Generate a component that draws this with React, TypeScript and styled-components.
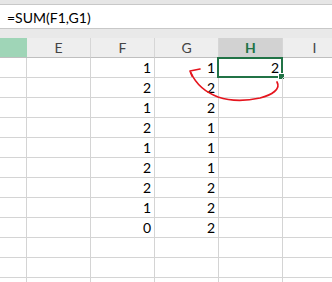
import React from "react";
import styled, { createGlobalStyle } from "styled-components";

const Global = createGlobalStyle`
  html, body { margin: 0; padding: 0; background: #ffffff; overflow: hidden; }
  body { font-family: Lato, "Open Sans", "Liberation Sans", sans-serif; }
`;

const Page = styled.div`
  width: 332px;
  height: 282px;
  display: flex;
  flex-direction: column;
  overflow: hidden;
  background: #ffffff;
`;

const TopStrip = styled.div`
  height: 4px;
  background: #e6e6e6;
  border-bottom: 1px solid #c8c8c8;
  flex: none;
`;

const FormulaBar = styled.div`
  height: 24px;
  flex: none;
  display: flex;
  align-items: center;
  padding-left: 7px;
  padding-top: 1px;
  box-sizing: border-box;
  background: #ffffff;
  border-bottom: 1px solid #c8c8c8;
  font-size: 14px;
  color: #000000;
`;

const Band = styled.div`
  height: 9px;
  flex: none;
  background: #e9e9e9;
`;

const Sheet = styled.div`
  position: relative;
  display: grid;
  grid-template-columns: 27px 64px 64px 64px 64px 64px 64px;
  grid-auto-rows: 20px;
`;

const Header = styled.div<{ $state?: "corner" | "active" }>`
  height: 20px;
  box-sizing: border-box;
  display: flex;
  align-items: center;
  justify-content: center;
  font-size: 14px;
  background: ${(p) =>
    p.$state === "corner" ? "#9fd5b7" : p.$state === "active" ? "#d2d2d2" : "#eeeeee"};
  color: ${(p) => (p.$state === "active" ? "#217346" : "#444444")};
  font-weight: ${(p) => (p.$state === "active" ? 700 : 400)};
  border-right: 1px solid ${(p) => (p.$state === "corner" ? "#9fd5b7" : "#d6d6d6")};
  border-bottom: 1px solid ${(p) => (p.$state === "active" ? "#217346" : "#bfbfbf")};
`;

const Cell = styled.div`
  position: relative;
  height: 20px;
  box-sizing: border-box;
  display: flex;
  align-items: flex-end;
  justify-content: flex-end;
  padding: 0 3px 1px 0;
  font-size: 14px;
  color: #000000;
  border-right: 1px solid #d4d4d4;
  border-bottom: 1px solid #d4d4d4;
`;

const Selection = styled.div`
  position: absolute;
  left: -2px;
  top: -1px;
  width: 66px;
  height: 21px;
  box-sizing: border-box;
  border: 2px solid #217346;
  pointer-events: none;
`;

const FillHandle = styled.div`
  position: absolute;
  right: -4px;
  bottom: -4px;
  width: 5px;
  height: 5px;
  background: #217346;
  border: 1px solid #ffffff;
`;

const Arrow = styled.svg`
  position: absolute;
  left: 0;
  top: 0;
  pointer-events: none;
`;

const cols = ["", "E", "F", "G", "H", "I", ""];
const F = [1, 2, 1, 2, 1, 2, 2, 1, 0];
const G = [1, 2, 2, 1, 1, 1, 2, 2, 2];

export default function App() {
  const rows = Array.from({ length: 12 }, (_, i) => i);
  return (
    <Page>
      <Global />
      <TopStrip />
      <FormulaBar>=SUM(F1,G1)</FormulaBar>
      <Band />
      <Sheet>
        {cols.map((c, i) => (
          <Header key={"h" + i} $state={i === 0 ? "corner" : i === 4 ? "active" : undefined}>
            {c}
          </Header>
        ))}
        {rows.map((r) =>
          cols.map((_, ci) => {
            let v: React.ReactNode = null;
            if (ci === 2 && r < F.length) v = F[r];
            if (ci === 3 && r < G.length) v = G[r];
            if (ci === 4 && r === 0) v = 2;
            return (
              <Cell key={r + "-" + ci}>
                {v}
                {ci === 4 && r === 0 && (
                  <Selection>
                    <FillHandle />
                  </Selection>
                )}
              </Cell>
            );
          })
        )}
        <Arrow width="332" height="240" viewBox="0 0 332 240">
          <path
            d="M277 44 C281 51 272 57 260 60 C246 63 230 63 218 59 C205 54 196 46 191 35"
            fill="none"
            stroke="#e5141d"
            strokeWidth="1.7"
            strokeLinecap="round"
          />
          <path
            d="M200 31 L190 33 L192 38"
            fill="none"
            stroke="#e5141d"
            strokeWidth="1.7"
            strokeLinecap="round"
            strokeLinejoin="round"
          />
        </Arrow>
      </Sheet>
    </Page>
  );
}
